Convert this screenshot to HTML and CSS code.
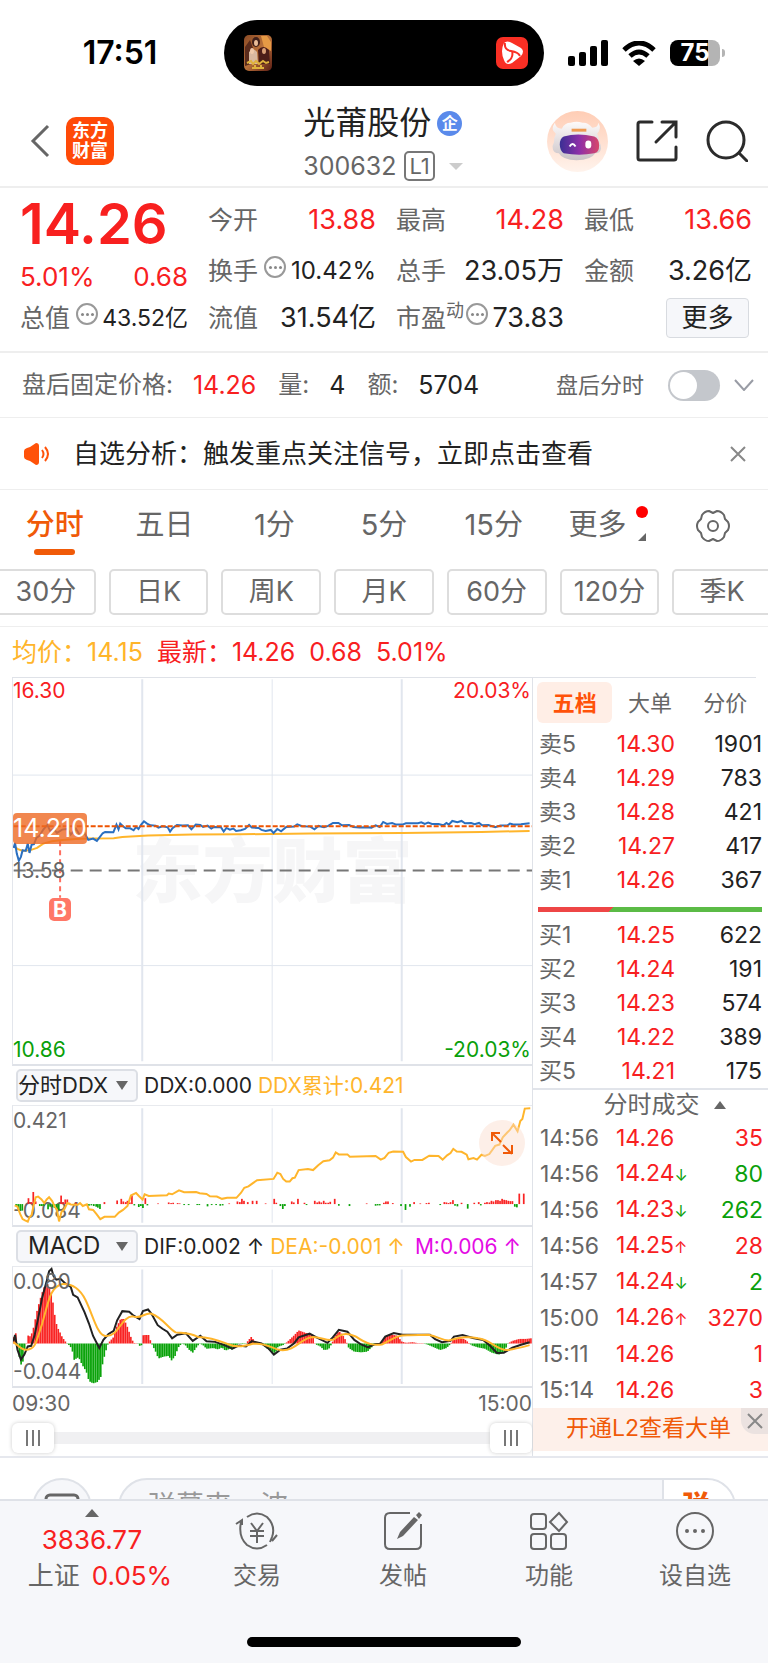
FILE: index.html
```html
<!DOCTYPE html>
<html lang="zh-CN">
<head>
<meta charset="utf-8">
<meta name="viewport" content="width=device-width, initial-scale=1">
<title>光莆股份 300632</title>
<link rel="stylesheet" href="styles.css">
</head>
<body>
<div class="status">
  <time class="clock">17:51</time>
  <div class="island">
    <svg class="thumb" viewBox="0 0 28 36" aria-hidden="true">
      <defs><linearGradient id="tg" x1="0" y1="0" x2="1" y2="1"><stop offset="0" stop-color="#8a4a25"/><stop offset=".5" stop-color="#b9713a"/><stop offset="1" stop-color="#5b1d14"/></linearGradient></defs>
      <rect width="28" height="36" rx="5" fill="url(#tg)"/>
      <path d="M17 1h6l4 6v9l-7-4z" fill="#e59a45"/><path d="M1 12l5-7 3 8-2 16-6 2z" fill="#5a2b1c"/>
      <ellipse cx="12" cy="7" rx="4" ry="5" fill="#40201a"/><ellipse cx="12" cy="8" rx="2" ry="3" fill="#e9bd98"/>
      <path d="M5 17q4-5 8 0l1 12H5z" fill="#d9b8a0"/><ellipse cx="8" cy="16" rx="2" ry="3" fill="#f0c9aa"/>
      <path d="M14 15q5-6 11 0l1 14H15z" fill="#4c1d18"/><ellipse cx="20" cy="16" rx="2" ry="3" fill="#d9a077"/>
      <path d="M3 28l4-2 2 3 3-3 3 3 4-3 3 2 3-1M8 33h12M11 30v4M17 30v4" fill="none" stroke="#e0b23c" stroke-width="2"/>
    </svg>
    <svg class="redapp" viewBox="0 0 32 32" aria-hidden="true">
      <rect width="32" height="32" rx="7" fill="#f92f24"/>
      <path d="M8 6q3-3 8 0l9 5q4 3 0 8l-9 7q-6 3-8-3-4-9 0-17z" fill="#fff"/>
      <path d="M9 6q-1 7 6 8 7 1 9 5M16 14q2 7-5 11" fill="none" stroke="#f92f24" stroke-width="2"/>
    </svg>
  </div>
  <div class="signals">
    <svg class="cell" viewBox="0 0 40 26" aria-hidden="true"><rect y="16" width="7" height="10" rx="2"/><rect x="11" y="12" width="7" height="14" rx="2"/><rect x="22" y="6" width="7" height="20" rx="2"/><rect x="33" width="7" height="26" rx="2"/></svg>
    <svg class="wifi" viewBox="0 0 34 25" aria-hidden="true"><path d="M2 9q15-14 30 0" fill="none" stroke="#000" stroke-width="5"/><path d="M8 15q9-8 18 0" fill="none" stroke="#000" stroke-width="5"/><path d="M11 20q6-5 12 0l-6 5z"/></svg>
    <span class="battery">75</span>
  </div>
</div>

<header class="head">
  <div class="head-left">
    <button class="plain" aria-label="返回"><svg class="back" viewBox="0 0 20 34"><path d="M18 2L3 17l15 15"/></svg></button>
    <a class="brand" href="#"><span>东方</span><span>财富</span></a>
  </div>
  <div class="title">
    <h1>光莆股份<span class="badge">企</span></h1>
    <button class="plain code">300632<span class="lv">L1</span><i class="tri-down light"></i></button>
  </div>
  <div class="head-right">
    <button class="plain" aria-label="智能助手"><svg class="robot" viewBox="0 0 62 62">
      <defs>
        <linearGradient id="rb" x1="0" y1="0" x2="0" y2="1"><stop offset="0" stop-color="#ffcdb5"/><stop offset="1" stop-color="#fff3ec"/></linearGradient>
        <linearGradient id="vis"><stop offset="0" stop-color="#3a2f94"/><stop offset=".5" stop-color="#8e2fa8"/><stop offset="1" stop-color="#d8476a"/></linearGradient>
        <linearGradient id="hel" x1="0" y1="0" x2="0" y2="1"><stop offset="0" stop-color="#fdfafa"/><stop offset="1" stop-color="#c9c2c6"/></linearGradient>
      </defs>
      <circle cx="31" cy="31" r="31" fill="url(#rb)"/>
      <path d="M8 12Q3 19 9 23 7 27 7 32 5 35 6 39 7 43 12 43 16 50 30 50 45 50 49 43 54 43 55 38 55 34 53 31 53 26 51 23 56 18 52 12 52 17 46 17 41 11 36 12 30 10 24 12 18 12 15 18 9 18 8 12z" fill="url(#hel)"/>
      <path d="M25 18h15v3H25z" fill="#ef9a52"/>
      <path d="M17 26q14-4 31 0 5 2 5 9t-5 8q-15 3-31 0-4-3-4-9t4-8z" fill="url(#vis)"/>
      <path d="M23 36q3-5 6 0" fill="none" stroke="#fff" stroke-width="2"/><rect x="39" y="30" width="6" height="8" rx="3" fill="#fff"/>
    </svg></button>
    <button class="plain" aria-label="分享"><svg class="share" viewBox="0 0 42 42"><path d="M16 2H4q-2 0-2 2v34q0 2 2 2h34q2 0 2-2V27M26 2h14v15M39 3L20 22"/></svg></button>
    <button class="plain" aria-label="搜索"><svg class="search" viewBox="0 0 42 42"><circle cx="20" cy="20" r="18"/><path d="M33 33l8 8"/></svg></button>
  </div>
</header>

<section class="quote">
  <div class="big">14.26</div>
  <div class="cell-row"><span class="lab">今开</span><span class="red">13.88</span></div>
  <div class="cell-row"><span class="lab">最高</span><span class="red">14.28</span></div>
  <div class="cell-row"><span class="lab">最低</span><span class="red">13.66</span></div>

  <div class="cell-row red low"><span>5.01%</span><span>0.68</span></div>
  <div class="cell-row"><span class="lab">换手<i class="more-dot"></i></span><span class="sm">10.42%</span></div>
  <div class="cell-row"><span class="lab">总手</span><span>23.05万</span></div>
  <div class="cell-row"><span class="lab">金额</span><span>3.26亿</span></div>

  <div class="cell-row"><span class="lab">总值<i class="more-dot"></i></span><span class="xs">43.52亿</span></div>
  <div class="cell-row"><span class="lab">流值</span><span>31.54亿</span></div>
  <div class="cell-row"><span class="lab">市盈<sup>动</sup><i class="more-dot"></i></span><span>73.83</span></div>
  <div class="cell-row end"><button class="more-btn">更多</button></div>
</section>

<section class="after">
  <span class="lab">盘后固定价格:</span><span class="red val">14.26</span>
  <span class="lab">量:</span><span class="val">4</span>
  <span class="lab">额:</span><span class="val">5704</span>
  <label class="switch"><span>盘后分时</span><input type="checkbox"></label>
  <svg class="chev" viewBox="0 0 20 12" aria-hidden="true"><path d="M1 1l9 10 9-10"/></svg>
</section>

<section class="notice">
  <svg class="horn" viewBox="0 0 26 22" aria-hidden="true"><path d="M0 8q0-2 3-3l3-1 6-4q3 0 3 3v16q0 3-3 3l-6-4-3-1q-3-1-3-3z" fill="#ff5209"/><path d="M18 7q3 4 0 8M21 4q6 7 0 14" fill="none" stroke="#ff5209" stroke-width="2"/></svg>
  <a href="#">自选分析：触发重点关注信号，立即点击查看</a>
  <button class="plain" aria-label="关闭"><svg class="x" viewBox="0 0 16 16"><path d="M1 1l14 14M15 1L1 15"/></svg></button>
</section>

<nav class="tabs">
  <button class="tab on">分时</button><button class="tab">五日</button><button class="tab">1分</button><button class="tab">5分</button><button class="tab">15分</button><button class="tab more">更多</button>
  <button class="tab" aria-label="设置"><svg class="gear" viewBox="0 0 34 32"><path d="M32 20Q34 16 32 12L29 9 28 5Q25 1 21 1L17 3 13 1Q9 1 6 5L5 9 2 12Q0 16 2 20L5 23 6 27Q9 31 13 31L17 29 21 31Q25 31 28 27L29 23z"/><circle cx="17" cy="16" r="5"/></svg></button>
</nav>
<div class="periods">
  <button>30分</button><button>日K</button><button>周K</button><button>月K</button><button>60分</button><button>120分</button><button>季K</button>
</div>
<div class="legend"><span class="gold">均价：14.15</span><span class="red">最新：14.26</span><span class="red">0.68</span><span class="red">5.01%</span></div>

<main class="market">
  <div class="charts">
    <div class="plot main-plot">
      <span class="watermark">东方财富</span>
      <svg viewBox="37 24 1510 1161" preserveAspectRatio="none" aria-hidden="true">
        <path class="grid bold" d="M413 28V1177M1168 28V1177"/><path class="grid" d="M791 28V1177M37 316H1547M37 889H1547"/>
        <path class="dash-gray" d="M39 603H1547"/>
        <path class="avg" d="M39 530L50 538 65 544 90 541 107 535 125 522 150 515 180 511 220 508 260 507 330 506 355 502 430 498 560 495 700 494 900 492 1170 490 1400 487 1540 484"/>
        <path class="px" d="M39 535L43 520 48 552 54 574 60 562 65 542 74 544 80 522 85 550 91 526 98 524 105 505 115 498 125 480 137 466 145 484 155 478 165 490 180 480 195 478 205 495 220 477 232 498 245 490 256 511 270 507 281 514 298 491 305 487 329 488 338 465 344 479 349 462 357 470 365 476 378 476 388 482 395 472 402 478 410 465 418 455 427 462 437 467 452 468 460 474 472 470 487 473 494 486 501 476 514 466 530 468 546 467 556 479 569 465 582 466 590 472 603 468 614 477 622 472 642 473 650 486 658 475 668 480 678 477 686 484 700 482 712 478 724 466 732 474 752 475 760 481 772 484 787 481 795 490 806 478 817 485 832 472 855 471 864 464 878 470 902 471 914 479 926 469 942 473 954 469 968 460 984 460 994 467 1015 466 1027 472 1045 474 1065 473 1080 474 1092 467 1104 472 1114 457 1125 463 1140 460 1152 465 1170 465 1180 461 1215 461 1225 458 1235 463 1245 459 1256 463 1275 463 1289 467 1298 460 1305 465 1315 454 1330 458 1342 454 1352 461 1370 460 1380 464 1393 460 1402 467 1420 466 1440 473 1455 468 1475 468 1483 462 1495 465 1515 464 1540 461"/>
        <path class="dash-orange" d="M39 470H1547"/>
        <path class="dash-red" d="M174 515V685"/>
      </svg>
      <span class="tl red">16.30</span><span class="tr red">20.03%</span>
      <span class="price-tag">14.210</span><span class="mid">13.58</span><span class="buy-tag">B</span>
      <span class="bl green">10.86</span><span class="br green">-20.03%</span>
    </div>
    <div class="ind">
      <button class="pick wide">分时DDX<i class="tri-down"></i></button><span>DDX:0.000</span><span class="gold">DDX累计:0.421</span>
    </div>
    <div class="plot sub-plot">
      <span class="tl">0.421</span><span class="bl">-0.084</span>
      <svg viewBox="37 14 1510 364" preserveAspectRatio="none" aria-hidden="true">
        <path class="grid bold" d="M413 21V371M1168 21V371"/><path class="grid" d="M791 21V371"/>
        <g id="ddx-bars"></g>
        <path class="avg" d="M42 318L50 322 58 345 65 360 72 364 80 368 85 354 91 348 97 318 103 293 110 291 120 300 128 311 135 300 142 293 151 305 158 321 165 332 171 367 178 338 186 330 195 311 205 315 217 316 225 316 232 311 240 320 252 315 258 330 270 332 280 345 291 360 303 353 333 353 345 340 357 332 370 320 380 288 395 280 404 290 414 300 420 284 432 289 485 287 490 282 500 284 520 272 535 278 570 277 580 281 600 283 610 290 630 291 645 298 660 295 687 295 700 280 710 264 722 260 735 250 747 241 795 237 806 218 815 222 823 237 832 245 842 245 850 235 857 233 868 210 895 207 910 210 925 195 940 183 958 180 968 172 976 156 985 162 1010 162 1017 169 1092 167 1107 178 1118 173 1130 157 1143 153 1172 154 1180 170 1195 184 1205 179 1228 179 1248 166 1275 167 1287 178 1300 165 1310 158 1318 145 1328 153 1342 154 1357 163 1362 177 1377 173 1387 178 1400 163 1410 167 1423 161 1440 136 1452 132 1462 110 1475 95 1482 88 1493 71 1505 91 1513 60 1519 54 1526 22 1542 21"/>
      </svg>
      <button class="expand" aria-label="全屏"><svg viewBox="0 0 24 24"><path d="M11 11L2 2M2 10V2h8M13 14l9 9M22 14v8h-9"/></svg></button>
    </div>
    <div class="ind">
      <button class="pick">MACD<i class="tri-down"></i></button><span>DIF:0.002 ↑</span><span class="gold">DEA:-0.001 ↑</span><span class="pink">M:0.006 ↑</span>
    </div>
    <div class="plot sub-plot">
      <svg viewBox="37 17 1510 364" preserveAspectRatio="none" aria-hidden="true">
        <path class="grid bold" d="M413 25V375M1168 25V375"/><path class="grid" d="M791 25V375"/>
        <g id="macd-bars"></g>
        <path class="dif" d="M38 245L43 225 50 270 60 300 70 285 80 260 90 258 100 225 110 175 122 110 135 60 142 30 149 23 155 45 163 56 175 53 190 68 205 78 212 102 225 110 245 155 258 190 270 228 288 265 300 240 315 222 330 212 340 180 355 152 375 154 388 166 405 176 415 152 430 147 440 160 458 195 472 206 486 215 500 235 515 224 540 220 560 243 582 227 600 244 625 246 650 255 675 267 695 257 715 260 732 244 760 251 780 266 796 285 815 270 835 266 855 250 868 232 900 221 920 232 952 249 965 235 985 209 1010 215 1030 240 1050 254 1070 263 1090 253 1105 252 1120 230 1145 219 1170 224 1250 224 1265 238 1285 247 1310 243 1320 230 1345 225 1375 234 1405 240 1425 258 1445 280 1465 279 1490 264 1515 255 1540 247"/>
        <path class="avg" d="M38 247C55 258 60 271 75 270C105 270 105 240 122 190C140 125 145 75 182 69C215 68 235 90 248 118C270 165 282 225 305 228C345 232 350 170 385 168C410 178 420 155 440 160C475 175 485 200 510 217C530 220 545 216 575 231C620 233 640 244 665 254C690 265 710 258 735 252C775 247 790 268 815 271C860 276 875 232 910 231C935 231 950 245 970 239C1000 214 1015 222 1035 230C1070 256 1090 257 1110 254C1140 240 1150 224 1190 226L1245 224C1275 230 1285 242 1305 242C1340 232 1360 228 1390 235C1430 240 1440 270 1475 271C1500 268 1520 262 1540 256"/>
      </svg>
      <span class="tl">0.080</span><span class="bl">-0.044</span>
    </div>
    <div class="times"><span>09:30</span><span>15:00</span></div>
    <div class="range"><button class="grip" aria-label="起点"><i></i></button><button class="grip" aria-label="终点"><i></i></button></div>
  </div>

  <aside class="book">
    <div class="book-tabs"><button class="on">五档</button><button>大单</button><button>分价</button></div>
    <table class="depth"><tbody>
      <tr><th>卖5</th><td>14.30</td><td>1901</td></tr><tr><th>卖4</th><td>14.29</td><td>783</td></tr><tr><th>卖3</th><td>14.28</td><td>421</td></tr><tr><th>卖2</th><td>14.27</td><td>417</td></tr><tr><th>卖1</th><td>14.26</td><td>367</td></tr>
    </tbody></table>
    <div class="ratio"></div>
    <table class="depth"><tbody>
      <tr><th>买1</th><td>14.25</td><td>622</td></tr><tr><th>买2</th><td>14.24</td><td>191</td></tr><tr><th>买3</th><td>14.23</td><td>574</td></tr><tr><th>买4</th><td>14.22</td><td>389</td></tr><tr><th>买5</th><td>14.21</td><td>175</td></tr>
    </tbody></table>
    <h2>分时成交<i class="tri-up"></i></h2>
    <table class="ticks"><tbody>
      <tr><th>14:56</th><td>14.26</td><td class="red">35</td></tr>
      <tr><th>14:56</th><td>14.24<b class="green">↓</b></td><td class="green">80</td></tr>
      <tr><th>14:56</th><td>14.23<b class="green">↓</b></td><td class="green">262</td></tr>
      <tr><th>14:56</th><td>14.25<b>↑</b></td><td class="red">28</td></tr>
      <tr><th>14:57</th><td>14.24<b class="green">↓</b></td><td class="green">2</td></tr>
      <tr><th>15:00</th><td>14.26<b>↑</b></td><td class="red">3270</td></tr>
      <tr><th>15:11</th><td>14.26</td><td class="red">1</td></tr>
      <tr><th>15:14</th><td>14.26</td><td class="red">3</td></tr>
    </tbody></table>
    <div class="promo"><a href="#">开通L2查看大单</a><button aria-label="关闭"><svg class="x" viewBox="0 0 16 16"><path d="M1 1l14 14M15 1L1 15"/></svg></button></div>
  </aside>
</main>

<form class="danmu">
  <button class="round" type="button" aria-label="键盘"><svg viewBox="0 0 36 30"><rect x="2" y="2" width="32" height="26" rx="4"/></svg></button>
  <div class="field"><input type="text" aria-label="弹幕" placeholder="弹幕来一波"><button type="button">弹</button></div>
</form>

<footer class="dock">
  <div class="dock-row">
    <button class="index"><i class="tri-up"></i><span class="red">3836.77</span><span class="name">上证<em class="red">0.05%</em></span></button>
    <button><svg viewBox="0 0 44 40"><path d="M12 6q10-7 20 0 9 9 5 20M37 26l-2 5M42 24l-5 6M32 34q-10 7-20 0Q3 26 6 11M1 13l6-4v5M16 12l6 8 6-8M15 20h14M15 25h14M22 20v12"/></svg>交易</button>
    <button><svg viewBox="0 0 44 40"><path d="M29 2H9Q4 2 4 7v26q0 5 5 5h26q5 0 5-5V13"/><path class="pen" d="M33 6l4 3-15 16-6 3 3-7zM35 4l3-3 3 3-3 4z"/></svg>发帖</button>
    <button><svg viewBox="0 0 44 40"><rect x="4" y="3" width="15" height="15" rx="3"/><rect x="4" y="23" width="15" height="15" rx="3"/><rect x="24" y="23" width="15" height="15" rx="3"/><path d="M32 2l8 9-8 9-9-9z"/></svg>功能</button>
    <button><svg viewBox="0 0 44 40"><circle cx="22" cy="20" r="18"/><circle class="solid" cx="14" cy="20" r="1"/><circle class="solid" cx="22" cy="20" r="1"/><circle class="solid" cx="30" cy="20" r="1"/></svg>设自选</button>
  </div>
  <div class="home"></div>
</footer>
<script src="charts.js"></script>
</body>
</html>
```
FILE: styles.css
```css
* { box-sizing: border-box; }
body { margin: 0; background: #fff; color: #222; font-family: Inter, "Noto Sans CJK SC", sans-serif; font-size: 24px; line-height: 1.2; overflow-x: hidden; }
button, input { font: inherit; color: inherit; }
button { padding: 0; border: 0; background: none; }
a { color: inherit; text-decoration: none; }
svg { display: block; }
i { font-style: normal; }
.plain { display: flex; align-items: center; }
.red { color: #f8201f; }
.green { color: #0a9f0a; }
.gold { color: #ffb52b; }
.pink { color: #e40be4; }
.lab { color: #666; }
.tri-down { border: 6px solid transparent; border-top: 9px solid #666; border-bottom: 0; }
.tri-down.light { border-width: 7px; border-top-color: #ccc; border-bottom: 0; }
.tri-up { border: 6px solid transparent; border-bottom: 8px solid #666; border-top: 0; }
.x { width: 16px; height: 16px; fill: none; stroke: #888; stroke-width: 2; }

/* status bar */
.status { display: grid; grid-template-columns: 1fr 320px 1fr; align-items: center; height: 98px; padding-top: 8px; color: #000; }
.clock { justify-self: center; font-size: 32px; font-weight: 600; padding-left: 16px; }
.island { display: flex; align-items: center; justify-content: space-between; height: 66px; padding: 0 16px 0 20px; border-radius: 33px; background: #000; }
.thumb { width: 28px; height: 36px; }
.redapp { width: 32px; height: 32px; }
.signals { display: flex; align-items: center; gap: 14px; padding-left: 24px; }
.cell { width: 40px; height: 26px; }
.wifi { width: 34px; height: 25px; }
.battery { position: relative; width: 50px; height: 26px; border-radius: 8px; background: linear-gradient(90deg, #000 76%, #b4b4b4 76%); color: #fff; font-size: 24px; font-weight: 700; line-height: 26px; text-align: center; }
.battery::after { content: ""; position: absolute; right: -5px; top: 9px; width: 3px; height: 8px; border-radius: 0 3px 3px 0; background: #b4b4b4; }

/* header */
.head { display: grid; grid-template-columns: 1fr auto 1fr; align-items: center; height: 90px; padding: 0 20px 2px 30px; border-bottom: 2px solid #eee; }
.head-left { display: flex; align-items: center; gap: 16px; }
.back { width: 20px; height: 34px; fill: none; stroke: #666; stroke-width: 3; }
.brand { display: flex; flex-direction: column; align-items: center; justify-content: center; width: 48px; height: 48px; border-radius: 10px; background: #ff4a08; color: #fff; font-size: 18px; font-weight: 700; line-height: 20px; }
.title { padding-right: 12px; }
.title h1 { display: flex; align-items: center; gap: 6px; margin: 0; font-size: 32px; font-weight: 400; line-height: 50px; }
.badge { display: grid; place-items: center; width: 25px; height: 25px; border-radius: 50%; background: #5a8aeb; color: #fff; font-size: 16px; font-weight: 700; line-height: 1; }
.code { gap: 8px; color: #666; font-size: 25px; line-height: 36px; }
.lv { padding: 0 3px; border: 2px solid #777; border-radius: 5px; font-size: 22px; line-height: 26px; }
.code .tri-down { margin-left: 6px; }
.head-right { display: flex; align-items: center; justify-content: flex-end; gap: 28px; }
.robot { width: 61px; height: 61px; }
.share, .search { width: 42px; height: 42px; fill: none; stroke: #2b2b2b; stroke-width: 3; stroke-linecap: round; }

/* quote */
.quote { display: grid; grid-template-columns: repeat(4, minmax(0, 1fr)); grid-template-rows: 56px 46px 48px; column-gap: 20px; align-items: center; padding: 4px 16px 9px 20px; border-bottom: 2px solid #eee; }
.big { padding-top: 8px; color: #f8201f; font-size: 56px; font-weight: 600; line-height: 56px; }
.cell-row { display: flex; align-items: center; justify-content: space-between; font-size: 27px; line-height: 32px; white-space: nowrap; }
.low { padding-top: 12px; font-size: 26px; }
.end { justify-content: flex-end; padding-right: 3px; }
.cell-row .lab { display: flex; align-items: center; font-size: 25px; }
.cell-row .sm { font-size: 24px; }
.cell-row .xs { font-size: 23px; }
.cell-row sup { align-self: flex-start; font-size: 18px; line-height: 18px; }
.more-dot { display: grid; place-items: center; width: 22px; height: 22px; margin: 0 0 8px 6px; border: 2px solid #999; border-radius: 50%; }
sup + .more-dot { margin-left: 2px; }
.more-dot::before { content: ""; width: 3px; height: 3px; border-radius: 50%; background: #888; box-shadow: -5px 0 #888, 5px 0 #888; }
.more-btn { width: 83px; height: 40px; border: 1px solid #d8dbe0; border-radius: 4px; background: #f6f7fa; font-size: 26px; }

/* after-hours */
.after { display: flex; align-items: center; gap: 20px; height: 65px; padding: 0 14px 0 22px; border-bottom: 1px solid #eee; font-size: 24px; }
.after .val { margin-right: 2px; font-size: 25px; }
.switch { display: flex; align-items: center; gap: 24px; margin-left: auto; color: #666; font-size: 22px; }
.switch input { appearance: none; width: 52px; height: 31px; margin: 0; border-radius: 16px; background: #c4c7cc; }
.switch input::before { content: ""; display: block; width: 27px; height: 27px; margin: 2px; border-radius: 50%; background: #fff; }
.chev { width: 20px; height: 12px; margin-left: -6px; fill: none; stroke: #999ca5; stroke-width: 2; }
.notice { display: flex; align-items: center; gap: 23px; height: 72px; padding: 0 22px 0 24px; border-bottom: 1px solid #eee; font-size: 26px; }
.notice .plain { margin-left: auto; }
.horn { width: 26px; height: 22px; }

/* tabs */
.tabs { display: grid; grid-template-columns: repeat(7, minmax(0, 1fr)); height: 71px; }
.tab { position: relative; display: flex; align-items: center; justify-content: center; color: #666; font-size: 29px; white-space: nowrap; }
.tab.on { color: #f05a08; font-weight: 500; }
.tab.on::after { content: ""; position: absolute; bottom: 6px; width: 41px; height: 6px; border-radius: 3px; background: #f05a08; }
.more { padding-right: 12px; }
.more::before { content: ""; position: absolute; top: 16px; right: 10px; width: 12px; height: 12px; border-radius: 50%; background: #f00; }
.more::after { content: ""; position: absolute; bottom: 20px; right: 12px; border-left: 8px solid transparent; border-bottom: 8px solid #666; }
.gear { width: 34px; height: 32px; fill: none; stroke: #666; stroke-width: 2; stroke-linejoin: round; }
.periods { display: grid; grid-template-columns: repeat(7, minmax(0, 1fr)); gap: 13px; margin: 0 -4px; padding: 8px 0 11px; border-bottom: 1px solid #eee; }
.periods button { height: 46px; border: 2px solid #ddd; border-radius: 5px; color: #666; font-size: 27px; white-space: nowrap; }
.legend { display: flex; align-items: center; gap: 14px; height: 50px; padding-left: 12px; font-size: 25px; }

/* market */
.market { display: grid; grid-template-columns: minmax(0, 1fr) 235px; padding-left: 12px; border-bottom: 2px solid #e6e8ee; }
.charts { border-top: 1px solid #dfe2e8; border-right: 1px solid #dfe2e8; }
.plot { position: relative; border-left: 1px solid #e3e6ec; border-bottom: 2px solid #dfe2e8; color: #666; font-size: 21px; line-height: 24px; }
.plot > svg { position: relative; width: 100%; height: 100%; }
.main-plot { height: 388px; }
.sub-plot { height: 122px; border-top: 1px solid #e8eaee; }
.plot path { fill: none; vector-effect: non-scaling-stroke; }
.grid { stroke: #e1e6ee; stroke-width: 1; }
.grid.bold { stroke-width: 2; }
.avg { stroke: #ffb52b; stroke-width: 2; }
.px { stroke: #2a6fc0; stroke-width: 2; }
.dif { stroke: #222; stroke-width: 2; }
.dash-gray { stroke: #777; stroke-width: 2; stroke-dasharray: 12 7; }
.dash-orange { stroke: #ee5300; stroke-width: 2; stroke-dasharray: 5 2; }
.dash-red { stroke: #ff6f60; stroke-width: 2; stroke-dasharray: 5 4; }
.tl, .tr, .bl, .br, .mid, .price-tag, .buy-tag, .watermark { position: absolute; }
.tl { left: 0; top: 1px; }
.sub-plot .tl { top: 3px; }
.tr { right: 1px; top: 1px; }
.bl { left: 0; bottom: 2px; }
.br { right: 1px; bottom: 2px; }
.mid { left: 0; top: 47%; }
.price-tag { left: 0; top: 35%; border-radius: 4px; background: rgba(238, 105, 35, .8); color: #fff; font-size: 25px; line-height: 31px; }
.buy-tag { left: 36px; top: 57%; width: 22px; height: 23px; border-radius: 5px; background: #ff7767; color: #fff; font-weight: 700; line-height: 23px; text-align: center; }
.watermark { left: 0; right: 0; top: 40%; color: #f6f6f7; font-size: 70px; font-weight: 900; line-height: 80px; text-align: center; }
.ind { display: flex; align-items: center; gap: 6px; height: 39px; padding-left: 4px; font-size: 21px; white-space: nowrap; }
.ind .gold + .pink { margin-left: 4px; }
.pick { display: flex; align-items: center; justify-content: space-between; width: 122px; height: 33px; padding: 0 8px 0 10px; border: 2px solid #dcdfe5; border-radius: 5px; background: #f6f7fa; font-size: 24px; }
.pick.wide { padding-left: 0; font-size: 22px; }
.expand { position: absolute; right: 7px; top: 14px; display: grid; place-items: center; width: 46px; height: 46px; border-radius: 50%; background: rgba(250, 220, 205, .45); }
.expand svg { width: 24px; height: 24px; stroke: #f05a08; stroke-width: 2; }
.expand path { clip-path: polygon(0 0, 100% 0, 100% 100%, 0 100%); }
.times { display: flex; justify-content: space-between; height: 32px; align-items: center; color: #666; font-size: 21px; }
.range { display: flex; align-items: center; justify-content: space-between; height: 36px; background: linear-gradient(#f0f0f2, #f0f0f2) center / 100% 12px no-repeat; }
.grip { display: grid; place-items: center; width: 42px; height: 30px; border-radius: 6px; background: #fff; box-shadow: 0 0 4px #ccc; }
.grip i { width: 2px; height: 16px; background: #777; box-shadow: -6px 0 #777, 6px 0 #777; }

/* order book */
.book { display: flex; flex-direction: column; color: #222; font-size: 23px; line-height: 26px; }
.book-tabs { display: grid; grid-template-columns: repeat(3, 1fr); height: 50px; padding: 5px 5px 4px 4px; background: linear-gradient(#dfe2e8, #dfe2e8) 0 0 / 95% 1px no-repeat; color: #666; font-size: 22px; }
.book-tabs .on { border-radius: 6px; background: #ffeee6; color: #ff5209; font-weight: 600; }
table { width: 100%; border-collapse: collapse; table-layout: fixed; }
th, td { padding: 0; font-weight: 400; }
th { width: 70px; padding-left: 6px; color: #666; text-align: left; }
td:nth-child(2) { width: 72px; color: #f8201f; }
td:last-child { text-align: right; }
.depth tr { height: 34px; }
.depth td:nth-child(2) { text-align: right; }
.depth td:last-child { padding-right: 6px; }
.ratio { height: 5px; margin: 10px 6px 6px 5px; background: linear-gradient(135deg, #ee4646 33%, #5bbb46 33%); }
.book h2 { display: flex; align-items: center; justify-content: center; gap: 14px; height: 32px; margin: 0; padding-left: 28px; border-top: 2px solid #e1e4ea; color: #666; font-size: 24px; font-weight: 400; }
.ticks th { width: 83px; padding-left: 7px; }
.ticks td { white-space: nowrap; }
.ticks tr { height: 36px; }
.ticks td:last-child { padding-right: 5px; }
.ticks b { font-size: 16px; font-weight: 400; }
.promo { position: relative; flex: none; height: 43px; background: #fdf0ea; color: #f05a08; font-size: 23px; line-height: 41px; text-align: center; padding-right: 4px; }
.promo button { position: absolute; right: 0; top: 0; display: grid; place-items: center; width: 27px; height: 26px; border-radius: 0 0 0 14px; background: #ebe2e0; }

/* comment box */
.danmu { display: flex; gap: 26px; height: 84px; padding: 20px 32px 0; }
.round { flex: none; width: 60px; height: 60px; border: 2px solid #dfe2e8; border-radius: 50%; background: #f6f7fa; }
.round svg { width: 36px; margin: 0 auto; fill: none; stroke: #666; stroke-width: 3; }
.field { display: flex; flex: 1; height: 58px; border: 2px solid #dfe2e8; border-radius: 29px; background: #f6f7fa; overflow: hidden; }
.field input { flex: 1; min-width: 0; padding: 0 28px; border: 0; background: none; font-size: 28px; }
.field input::placeholder { color: #999; }
.field button { width: 72px; padding-right: 6px; border-left: 2px solid #dfe2e8; background: #fff; color: #f05a08; font-size: 28px; font-weight: 900; }

/* bottom dock */
.dock { position: fixed; left: 0; right: 0; bottom: 0; height: 164px; border-top: 2px solid #dfe2e8; background: #f6f7fa; color: #666; }
.dock-row { display: grid; grid-template-columns: 92fr 73fr 73fr 73fr 73fr; height: 90px; }
.dock button { display: flex; flex-direction: column; align-items: center; justify-content: flex-end; gap: 10px; line-height: 30px; white-space: nowrap; font-size: 24px; }
.dock svg { width: 44px; height: 40px; fill: none; stroke: #666; stroke-width: 2; }
.dock svg .solid { fill: #666; }
.dock svg .pen { fill: #666; stroke: none; }
.dock .index { gap: 6px; font-size: 26px; }
.dock .index .tri-up { border-width: 7px; border-top: 0; border-bottom-width: 8px; margin-bottom: 2px; }
.name { padding-left: 16px; }
.dock em { margin-left: 12px; font-style: normal; }
.home { width: 274px; height: 10px; margin: 46px auto 0; border-radius: 5px; background: #000; }
```
FILE: charts.js
```javascript
// Histogram envelopes: pairs of x position and signed bar height.
const macd = [40,20,46,33,52,-15,58,-60,64,-70,70,-20,76,0,82,28,88,20,96,45,108,105,120,150,132,185,140,180,150,150,158,90,165,52,172,38,180,20,188,8,194,0,200,-5,208,-15,215,-50,228,-42,238,-65,250,-85,258,-115,270,-122,282,-118,292,-105,298,-60,304,-35,312,-5,318,6,330,20,338,50,350,75,360,75,370,50,380,20,388,2,400,0,408,-10,414,0,416,26,432,26,438,5,444,-8,452,-25,460,-46,476,-40,490,-38,498,-52,508,-40,518,-12,528,0,538,-4,548,-18,560,-28,572,-10,580,0,590,-5,600,-16,620,-14,634,-18,645,-12,655,-22,668,-16,676,-20,684,-8,694,0,705,-2,715,0,722,10,730,20,740,8,752,2,762,0,770,-10,785,-22,800,-30,808,-10,825,-4,834,4,845,15,855,25,868,40,890,32,910,28,916,-2,930,-8,942,-20,955,-18,965,0,972,20,985,38,995,28,1006,8,1014,-14,1030,-25,1050,-27,1068,-25,1080,-12,1090,-4,1100,0,1110,4,1120,22,1135,28,1155,24,1168,6,1180,2,1200,4,1215,1,1230,1,1245,-4,1258,-10,1280,-20,1298,-14,1310,-2,1316,10,1330,16,1350,14,1362,3,1372,-6,1390,-12,1410,-16,1430,-28,1450,-34,1468,-26,1474,-4,1480,2,1490,8,1510,14,1530,14,1545,16];
// Separate bars: pairs of x position and signed height.
const ddx = [46,-6,52,-14,58,-20,64,-20,82,18,90,6,96,37,103,8,115,-6,121,-6,127,-5,139,-16,145,-8,152,-10,158,-12,164,-20,170,-18,177,26,183,6,189,14,195,14,201,4,220,4,258,-5,265,-4,272,-6,279,-8,284,-11,290,-15,303,6,340,11,352,16,358,8,365,6,370,10,377,5,383,26,390,-4,403,-9,409,-6,415,-12,422,18,428,-4,459,2,490,5,497,3,503,4,516,3,522,2,535,-3,548,-3,573,-3,579,-3,603,-7,615,-3,628,-3,640,-5,647,-4,666,2,690,8,697,6,703,16,709,10,720,6,734,10,746,10,772,2,797,16,803,4,815,-6,822,-15,828,-6,848,8,854,5,866,16,885,4,891,-3,915,10,922,5,928,8,934,5,941,10,947,4,954,4,960,7,973,16,985,-5,1016,-6,1066,2,1092,-5,1098,-4,1104,-4,1116,4,1122,8,1128,8,1142,3,1166,-6,1179,-18,1192,-8,1204,6,1222,2,1240,3,1247,4,1280,-3,1292,6,1298,5,1304,3,1310,6,1317,12,1323,-5,1330,-7,1342,4,1360,-14,1379,4,1392,6,1398,-4,1410,4,1416,6,1423,5,1429,10,1435,8,1442,12,1448,12,1454,10,1460,16,1466,13,1472,12,1478,10,1484,9,1490,9,1497,-8,1503,-10,1510,32,1523,32];

function bar(group, x, h, zero, width) {
  const r = document.createElementNS("http://www.w3.org/2000/svg", "rect");
  r.setAttribute("x", x - width / 2);
  r.setAttribute("width", width);
  r.setAttribute("y", h > 0 ? zero - h : zero);
  r.setAttribute("height", Math.max(Math.abs(h), 1));
  r.setAttribute("fill", h > 0 ? "#f92323" : "#0aa30a");
  group.append(r);
}

const ddxGroup = document.getElementById("ddx-bars");
for (let i = 0; i < ddx.length; i += 2) bar(ddxGroup, ddx[i], ddx[i + 1], 314, 5);

const macdGroup = document.getElementById("macd-bars");
for (let x = 40, i = 0; x < 1546; x += 5.15) {
  while (i + 3 < macd.length - 1 && macd[i + 2] < x) i += 2;
  const t = (x - macd[i]) / (macd[i + 2] - macd[i]);
  bar(macdGroup, x, macd[i + 1] + t * (macd[i + 3] - macd[i + 1]), 251, 4.8);
}
```
